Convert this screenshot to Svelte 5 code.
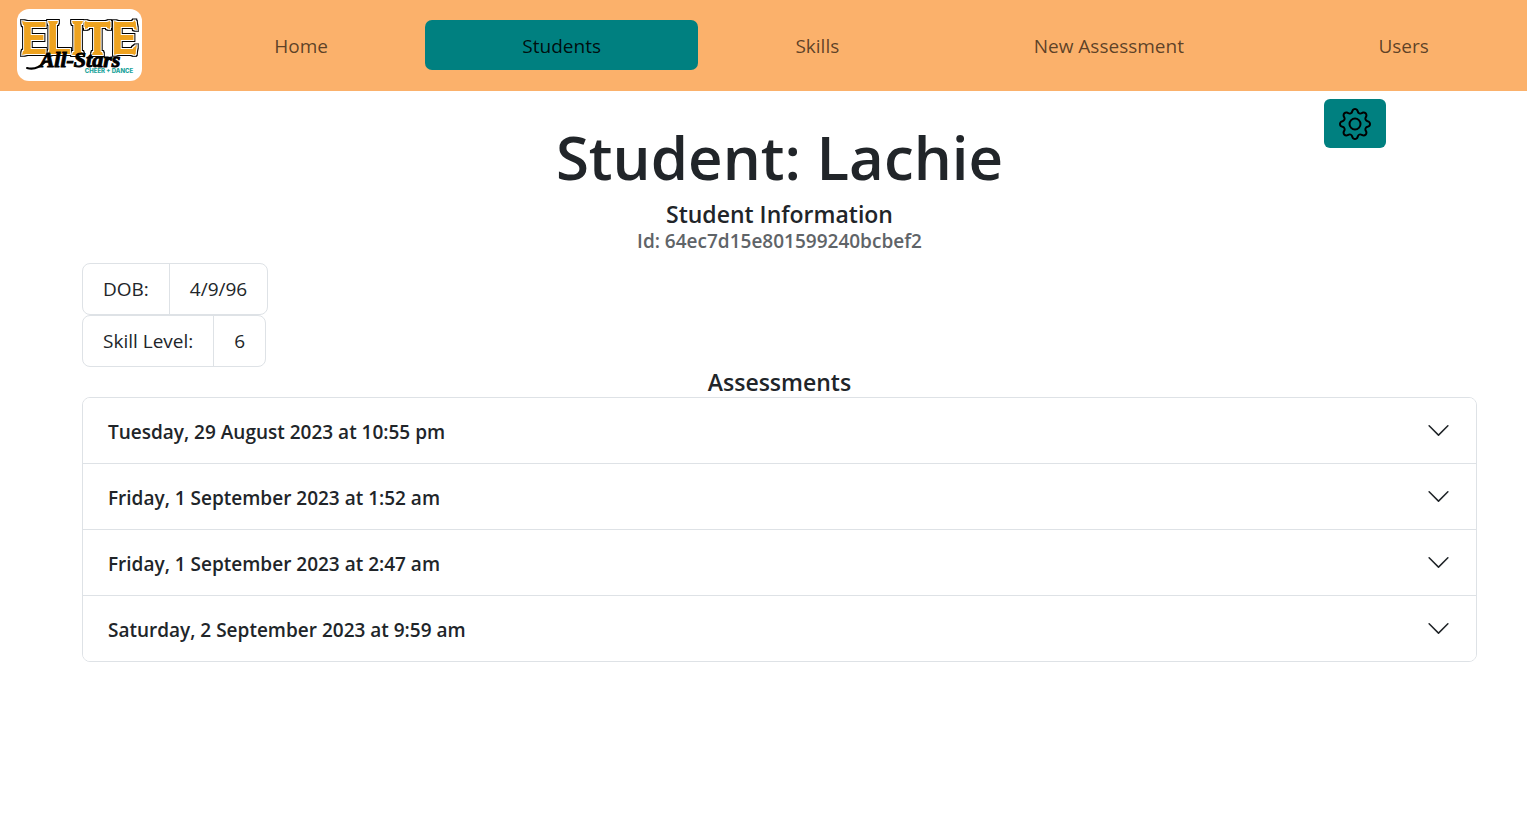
<script>
  const links = ['Home', 'Students', 'Skills', 'New Assessment', 'Users'];
  const details = [
    { label: 'DOB:', value: '4/9/96' },
    { label: 'Skill Level:', value: '6' }
  ];
  const assessments = [
    'Tuesday, 29 August 2023 at 10:55 pm',
    'Friday, 1 September 2023 at 1:52 am',
    'Friday, 1 September 2023 at 2:47 am',
    'Saturday, 2 September 2023 at 9:59 am'
  ];
  let active = $state('Students');
</script>

<header class="navbar">
  <a class="brand" href="#home">
    <svg width="125" height="72" viewBox="0 0 125 72" role="img">
      <defs>
        <filter id="outline" x="-10%" y="-20%" width="120%" height="140%" color-interpolation-filters="sRGB">
          <feFlood flood-color="#000" />
          <feMorphology in="SourceAlpha" operator="dilate" radius="2" result="black" />
          <feMorphology in="SourceAlpha" operator="dilate" radius="1" result="inner" />
          <feFlood flood-color="#fff" />
          <feComposite in2="inner" operator="in" result="white" />
          <feMerge>
            <feMergeNode in="black" />
            <feMergeNode in="white" />
            <feMergeNode in="SourceGraphic" />
          </feMerge>
        </filter>
      </defs>
      <g class="elite" filter="url(#outline)">
        <text x="62" y="45" text-anchor="middle">ELITE</text>
        <path d="M5 12l4 1v4l-3-1zM5 46l4-1v-4l-3 1zM31 12h10l-1 3h-8zM31 46l3-1v-4l-2 1zM55 12h11l-1 3h-9zM55 46h11l-1-3h-9zM68 12l3 1v6l-3 1zM93 12l-3 1v6l3 1zM75 46h11l-1-3h-9zM97 12l3 1v4l-2-1zM97 46l3-1v-4l-2 1zM118 11l2 10-3-1-1-7zM120 36l-2 10-3-1 1-6z" />
      </g>
      <path d="M10 59c7 2 13-1 18-6" fill="none" stroke="#000" stroke-width="2" stroke-linecap="round" />
      <text class="stars" x="63" y="58" text-anchor="middle">All-Stars</text>
      <text class="tag" x="92" y="64" text-anchor="middle">CHEER + DANCE</text>
    </svg>
  </a>
  <nav>
    {#each links as link}
      <a href="#{link}" class:active={active === link} onclick={() => (active = link)}>{link}</a>
    {/each}
  </nav>
</header>

<main>
  <div class="heading">
    <h1>Student: Lachie</h1>
    <button class="settings" aria-label="Settings">
      <svg width="32" height="32" viewBox="0 0 16 16" fill="currentColor">
        <path d="M8 4.754a3.246 3.246 0 1 0 0 6.492 3.246 3.246 0 0 0 0-6.492zM5.754 8a2.246 2.246 0 1 1 4.492 0 2.246 2.246 0 0 1-4.492 0z" />
        <path d="M9.796 1.343c-.527-1.79-3.065-1.79-3.592 0l-.094.319a.873.873 0 0 1-1.255.52l-.292-.16c-1.64-.892-3.433.902-2.54 2.541l.159.292a.873.873 0 0 1-.52 1.255l-.319.094c-1.79.527-1.79 3.065 0 3.592l.319.094a.873.873 0 0 1 .52 1.255l-.16.292c-.892 1.64.901 3.434 2.541 2.54l.292-.159a.873.873 0 0 1 1.255.52l.094.319c.527 1.79 3.065 1.79 3.592 0l.094-.319a.873.873 0 0 1 1.255-.52l.292.16c1.64.893 3.434-.902 2.54-2.541l-.159-.292a.873.873 0 0 1 .52-1.255l.319-.094c1.79-.527 1.79-3.065 0-3.592l-.319-.094a.873.873 0 0 1-.52-1.255l.16-.292c.893-1.64-.902-3.433-2.541-2.54l-.292.159a.873.873 0 0 1-1.255-.52l-.094-.319zm-2.633.283c.246-.835 1.428-.835 1.674 0l.094.319a1.873 1.873 0 0 0 2.693 1.115l.291-.16c.764-.415 1.6.42 1.184 1.185l-.159.292a1.873 1.873 0 0 0 1.116 2.692l.318.094c.835.246.835 1.428 0 1.674l-.319.094a1.873 1.873 0 0 0-1.115 2.693l.16.291c.415.764-.42 1.6-1.185 1.184l-.291-.159a1.873 1.873 0 0 0-2.693 1.116l-.094.318c-.246.835-1.428.835-1.674 0l-.094-.319a1.873 1.873 0 0 0-2.692-1.115l-.292.16c-.764.415-1.6-.42-1.184-1.185l.159-.291A1.873 1.873 0 0 0 1.945 8.93l-.319-.094c-.835-.246-.835-1.428 0-1.674l.319-.094A1.873 1.873 0 0 0 3.06 4.377l-.16-.292c-.415-.764.42-1.6 1.185-1.184l.292.159a1.873 1.873 0 0 0 2.692-1.115l.094-.319z" />
      </svg>
    </button>
  </div>

  <h2>Student Information</h2>
  <p class="student-id">Id: 64ec7d15e801599240bcbef2</p>

  {#each details as item}
    <dl>
      <dt>{item.label}</dt>
      <dd>{item.value}</dd>
    </dl>
  {/each}

  <h2>Assessments</h2>
  <div class="accordion">
    {#each assessments as date}
      <button class="row" aria-expanded="false">
        <span>{date}</span>
        <svg width="25" height="25" viewBox="0 0 16 16" fill="currentColor">
          <path fill-rule="evenodd" d="M1.646 4.646a.5.5 0 0 1 .708 0L8 10.293l5.646-5.647a.5.5 0 0 1 .708.708l-6 6a.5.5 0 0 1-.708 0l-6-6a.5.5 0 0 1 0-.708z" />
        </svg>
      </button>
    {/each}
  </div>
</main>

<style>
  :global(body) {
    background: #fff;
    color: #212529;
    font-family: 'Segoe UI', 'Open Sans', 'Noto Sans', sans-serif;
    font-size: 19px;
    line-height: 30px;
  }
  h1, h2, p, dl, dd {
    margin: 0;
  }
  button {
    font: inherit;
    color: inherit;
    cursor: pointer;
  }
  .navbar {
    display: flex;
    align-items: center;
    gap: 35px;
    padding: 9px 1px 10px 17px;
    background: #fbb16b;
  }
  .brand {
    display: flex;
    flex: none;
    overflow: hidden;
    border-radius: 12px;
    background: #fff;
  }
  .elite {
    fill: #eea320;
    font-family: Roboto, sans-serif;
    font-size: 45px;
    font-weight: 700;
  }
  .stars {
    font: italic 700 22px 'Liberation Serif', serif;
    fill: #000;
    stroke: #000;
    stroke-width: 1px;
  }
  .tag {
    font: 800 6px Inter, sans-serif;
    fill: #1aa39b;
  }
  nav {
    display: flex;
    flex: 1;
  }
  nav a {
    flex: 1 1 auto;
    padding: 11px 0 9px;
    border-radius: 7px;
    color: rgba(0, 0, 0, 0.65);
    text-align: center;
    text-decoration: none;
  }
  nav a.active {
    background: #008080;
    color: rgba(0, 0, 0, 0.9);
  }
  main {
    padding: 8px 50px 40px 82px;
  }
  .heading {
    display: grid;
    grid-template-columns: 1fr auto 1fr;
    align-items: start;
  }
  h1 {
    grid-column: 2;
    padding: 23px 0 7px;
    font-size: 60px;
    font-weight: 600;
    line-height: 70px;
  }
  .settings {
    display: flex;
    justify-self: end;
    margin-right: 91px;
    padding: 9px 15px 8px;
    border: 0;
    border-radius: 6px;
    background: #008080;
    color: #000;
  }
  h2 {
    font-size: 23px;
    font-weight: 600;
    line-height: 30px;
    text-align: center;
  }
  .student-id {
    padding-bottom: 10px;
    color: #5f6468;
    font-weight: 600;
    line-height: 24px;
    text-align: center;
  }
  dl {
    display: flex;
    width: fit-content;
    border: 1px solid #dee2e6;
    border-radius: 8px;
  }
  dt, dd {
    padding: 10px 20px;
  }
  dd {
    border-left: 1px solid #dee2e6;
  }
  .accordion {
    overflow: hidden;
    border: 1px solid #dee2e6;
    border-radius: 8px;
  }
  .row {
    display: flex;
    align-items: center;
    justify-content: space-between;
    width: 100%;
    padding: 19px 25px 16px;
    border: 0;
    background: #fff;
    font-weight: 600;
    text-align: left;
  }
  .row + .row {
    border-top: 1px solid #dee2e6;
  }
  .row svg {
    margin-bottom: 4px;
  }
</style>
